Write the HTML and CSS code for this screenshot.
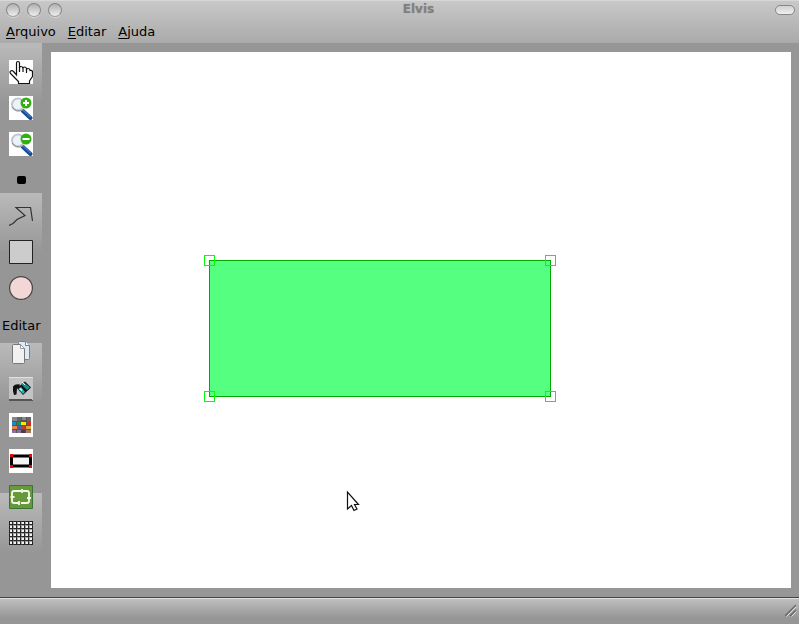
FILE: index.html
```html
<!DOCTYPE html>
<html lang="pt">
<head>
<meta charset="utf-8">
<title>Elvis</title>
<link rel="stylesheet" href="styles.css">
</head>
<body>
<header class="chrome">
  <div class="titlebar">
    <div class="controls">
      <button class="orb" aria-label="Fechar"></button>
      <button class="orb" aria-label="Minimizar"></button>
      <button class="orb" aria-label="Maximizar"></button>
    </div>
    <h1 class="title">Elvis</h1>
    <div class="controls"><button class="pill" aria-label="Barra de ferramentas"></button></div>
  </div>
  <nav class="menubar">
    <button class="menu"><u>A</u>rquivo</button>
    <button class="menu"><u>E</u>ditar</button>
    <button class="menu"><u>A</u>juda</button>
  </nav>
</header>
<main class="workspace">
  <aside class="toolbar">
    <button class="tool" aria-label="Selecionar">
      <svg viewBox="0 0 24 24"><path fill="#fff" d="M0 0h24v24H0z"/><path d="M7.500 15V3q0-1.500 1.500-1.500T10.500 3v5q0-1.500 1.500-1.500t2 1.500q0-1 1.500-1t2 1.500v1q0-1 1.500-1t2 1.500v.5q2-.5 2.500 1v5l-3 4.500v2.500H9.500v-2l-4-4-4-4q-1.200-2 .5-2.800 1.500-.5 2.500.8z" fill="#fff" stroke="#111" stroke-width="1.200"/><path d="M10.500 7v5M14 8v4M17.500 9v4" stroke="#111" stroke-width="1.200" fill="none"/></svg>
    </button>
    <button class="tool" aria-label="Ampliar">
      <svg viewBox="0 0 24 24"><path fill="#fff" d="M0 0h24v24H0z"/><path d="M14 15l7.500 7" stroke="#164a94" stroke-width="4" stroke-linecap="round"/><path d="M14 14l7.500 7" stroke="#3c78c8" stroke-width="1.500"/><circle cx="9" cy="8.500" r="6" fill="#eaf3fb" stroke="#c3c7cc" stroke-width="2"/><path d="M3 11q4 6 11 3" fill="none" stroke="#83898e"/><circle cx="17" cy="7" r="5.500" fill="#35ae14"/><path d="M17 4v6M14 7h6" stroke="#fff" stroke-width="2"/></svg>
    </button>
    <button class="tool" aria-label="Reduzir">
      <svg viewBox="0 0 24 24"><path fill="#fff" d="M0 0h24v24H0z"/><path d="M14 15l7.500 7" stroke="#164a94" stroke-width="4" stroke-linecap="round"/><path d="M14 14l7.500 7" stroke="#3c78c8" stroke-width="1.500"/><circle cx="9" cy="8.500" r="6" fill="#eaf3fb" stroke="#c3c7cc" stroke-width="2"/><path d="M3 11q4 6 11 3" fill="none" stroke="#83898e"/><circle cx="17" cy="7" r="5.500" fill="#35ae14"/><path d="M13.500 7h7" stroke="#fff" stroke-width="2"/></svg>
    </button>
    <button class="tool" aria-label="Ponto">
      <svg viewBox="0 0 24 24"><rect x="8" y="8" width="9" height="8" rx="2"/></svg>
    </button>
    <button class="tool" aria-label="Polilinha">
      <svg viewBox="0 0 24 24"><path d="M0 21.500l4-2 4-4 8-4-9-8h14.500l2 13.500" fill="none" stroke="#333" stroke-width="1.200"/></svg>
    </button>
    <button class="tool" aria-label="Retângulo">
      <svg viewBox="0 0 24 24"><path d="M.5.5h23v23H.5z" fill="#ccc" stroke="#222"/></svg>
    </button>
    <button class="tool" aria-label="Elipse">
      <svg viewBox="0 0 24 24"><circle cx="12" cy="12" r="11.400" fill="#f3d6d6" stroke="#444" stroke-width="1.200"/></svg>
    </button>
    <h2 class="label">Editar</h2>
    <button class="tool" aria-label="Copiar">
      <svg viewBox="0 0 24 24"><path d="M9.500 1.500q0-1 1-1h6l4 4v13q0 1-1 1h-10z" fill="#dce9f9" stroke="#6484b4"/><path d="M16.500.5v4h4" fill="#fff" stroke="#6484b4"/><path d="M3.500 4.500q0-1 1-1h7l4 4v14q0 1-1 1h-10q-1 0-1-1z" fill="#f1f1f1" stroke="#777"/><path d="M11.500 3.500v4h4z" fill="#fff" stroke="#999"/></svg>
    </button>
    <button class="tool" aria-label="Preencher">
      <svg viewBox="0 0 24 24"><path fill="#c3c3c3" d="M0 0h24v24H0z"/><path d="M0 23.500h24M0 22.500h23" stroke="#555" fill="none"/><path d="M0 .5h24" stroke="#e2e2e2"/><path d="M4 9.500q2-3 7-2l-1 3-2 1-.5 6-2.500.5-1-4z" fill="#111"/><path d="M8 11l8-6.500 6 6-8 7.500z" fill="#111"/><path d="M12 7l3-1.500 6 5-3 2.500z" fill="#139494"/><path d="M9.500 12l2.500-2 4 5-2 2z" fill="#2bb5b5"/><path d="M10 12l1.500-1 2 2-1 1z" fill="#c8ffff"/><path d="M13 5l3 3" stroke="#eee"/></svg>
    </button>
    <button class="tool" aria-label="Paleta">
      <svg viewBox="0 0 24 24" shape-rendering="crispEdges"><path fill="#fff" d="M0 0h24v24H0z"/><path fill="#555" d="M3 4h19v16H3z"/><path fill="#888" d="M3 4h5v4H3zM13 4h4v3h-4z"/><path fill="#666" d="M8 4h4v4H8zM18 4h4v4h-4z"/><path fill="#158bd3" d="M3 9h4v3H3z"/><path fill="#179462" d="M8 9h4v3H8z"/><path fill="#f8e500" d="M12 9h5v3h-5z"/><path fill="#dc2820" d="M18 8h4v4h-4z"/><path fill="#ed853d" d="M3 13h5v3H3z"/><path fill="#4964a0" d="M8 13h4v3H8z"/><path fill="#c73b35" d="M12 13h4v3h-4z"/><path fill="#d7aa35" d="M17 13h5v3h-5z"/><path fill="#8a719d" d="M3 17h4v3H3zM8 17h4v3H8z"/><path fill="#443f42" d="M12 17h4v3h-4z"/><path fill="#a8765e" d="M17 17h5v3h-5z"/></svg>
    </button>
    <button class="tool" aria-label="Contorno">
      <svg viewBox="0 0 24 24"><path fill="#fff" d="M0 0h24v24H0z"/><path d="M2.500 7h19v10h-19z" fill="#f4f4f4" stroke="#000" stroke-width="3"/><path d="M1 5h3v3H1zM20 5h3v3h-3zM1 16h3v3H1zM20 16h3v3h-3z" fill="#e00808"/></svg>
    </button>
    <button class="tool" aria-label="Transformar">
      <svg viewBox="0 0 24 24"><path d="M.5.5h23v23H.5z" fill="#67993b" stroke="#397436"/><path d="M3 11V8q0-2 2-2h7M14 6h4q2 0 2 2v4M20 14v2q0 2-2 2h-6M10 18H5q-2 0-2-2v-3M1.500 12h4M18 13h4M13 4v4M10 16v4" fill="none" stroke="#f1f8e9" stroke-width="1.800"/></svg>
    </button>
    <button class="tool" aria-label="Grade">
      <svg viewBox="0 0 24 24" shape-rendering="crispEdges"><path fill="#f2f2f2" d="M0 0h24v24H0z"/><path d="M0 .5h24M0 3.500h24M0 7.500h24M0 11.500h24M0 15.500h24M0 19.500h24M0 23.500h24M.5 0v24M3.500 0v24M7.500 0v24M11.500 0v24M15.500 0v24M19.500 0v24M23.500 0v24" stroke="#222"/><path d="M0 4.500h24M0 8.500h24M0 12.500h24M0 16.500h24M0 20.500h24M4.500 0v24M8.500 0v24M12.500 0v24M16.500 0v24M20.500 0v24" stroke="#555" stroke-opacity=".5"/></svg>
    </button>
  </aside>
  <section class="canvas" aria-label="Desenho">
    <svg class="drawing" aria-hidden="true">
      <rect x="158.500" y="208.500" width="341" height="136" fill="#55ff7f" stroke="#00aa00"/>
      <g fill="none" stroke="#00ff00">
        <rect x="153.500" y="203.500" width="10" height="10"/>
        <rect x="494.500" y="203.500" width="10" height="10"/>
        <rect x="153.500" y="339.500" width="10" height="10"/>
        <rect x="494.500" y="339.500" width="10" height="10"/>
      </g>
      <path transform="translate(296 439)" d="M.5 1v17l4-3.500 2.500 5 3-1.500-2.500-4.500h4z" fill="#fff" stroke="#111" stroke-width="1.200"/>
    </svg>
  </section>
</main>
<footer class="statusbar">
  <svg class="grip" viewBox="0 0 12 12" aria-hidden="true"><path d="M0 11L11 0M5 11l6-6" stroke="#666" stroke-width="1.300"/><path d="M1.500 11.500l10-10M6.500 11.500l5-5" stroke="#ddd"/></svg>
</footer>
</body>
</html>
```
FILE: styles.css
```css
* {
  box-sizing: border-box;
}

body {
  margin: 0;
  min-height: 100vh;
  display: flex;
  flex-direction: column;
  background: #969696;
  color: #000;
  font: 13px/16px "DejaVu Sans", sans-serif;
}

button {
  margin: 0;
  padding: 0;
  border: 0;
  background: none;
  color: inherit;
  font: inherit;
}

.chrome {
  background: linear-gradient(#c8c8c8, #aaaaaa);
  border-top: 1px solid #d8d8d8;
}

.titlebar {
  display: flex;
  height: 20px;
  padding: 0 4px 0 6px;
}

.controls {
  display: flex;
  align-items: center;
  gap: 7px;
  height: 18px;
}

.orb {
  width: 14px;
  height: 14px;
  border: 1px solid #858585;
  border-bottom-color: #a0a0a0;
  border-radius: 50%;
  background: linear-gradient(#b0b0b0, #eeeeee);
  box-shadow: 0 1px 0 #d8d8d8;
}

.pill {
  width: 20px;
  height: 10px;
  border: 1px solid #888;
  border-radius: 5px;
  background: linear-gradient(#d0d0d0, #f0f0f0);
}

.title {
  flex: 1;
  margin: 0;
  color: #808080;
  font-size: 12px;
  line-height: 16px;
  text-align: center;
  text-shadow: 0 0 1px #999;
}

.menubar {
  display: flex;
  gap: 12px;
  height: 22px;
  padding: 2px 6px;
}

.menu u {
  text-underline-offset: 2px;
}

.workspace {
  flex: 1;
  display: flex;
}

.toolbar {
  width: 42px;
  padding-top: 11px;
  display: flex;
  flex-direction: column;
  background: linear-gradient(#bababa, #969696 60px) 0 0 / 100% 150px;
}

.tool {
  height: 36px;
  display: flex;
  align-items: center;
  justify-content: center;
}

.tool svg {
  width: 24px;
  height: 24px;
}

.label {
  margin: 0;
  padding: 12px 0 1px 2px;
  font-size: 13px;
  font-weight: normal;
  line-height: 16px;
}

.canvas {
  flex: 1;
  margin: 9px 8px 9px 9px;
  background: #fff;
  display: flex;
}

.drawing {
  flex: 1;
  min-width: 0;
}

.statusbar {
  height: 27px;
  display: flex;
  align-items: center;
  justify-content: flex-end;
  padding-right: 2px;
  border-top: 1px solid #444;
  box-shadow: inset 0 1px 0 #e0e0e0;
  background: linear-gradient(#c0c0c0, #969696 20px);
}

.grip {
  width: 12px;
  height: 12px;
}
```
